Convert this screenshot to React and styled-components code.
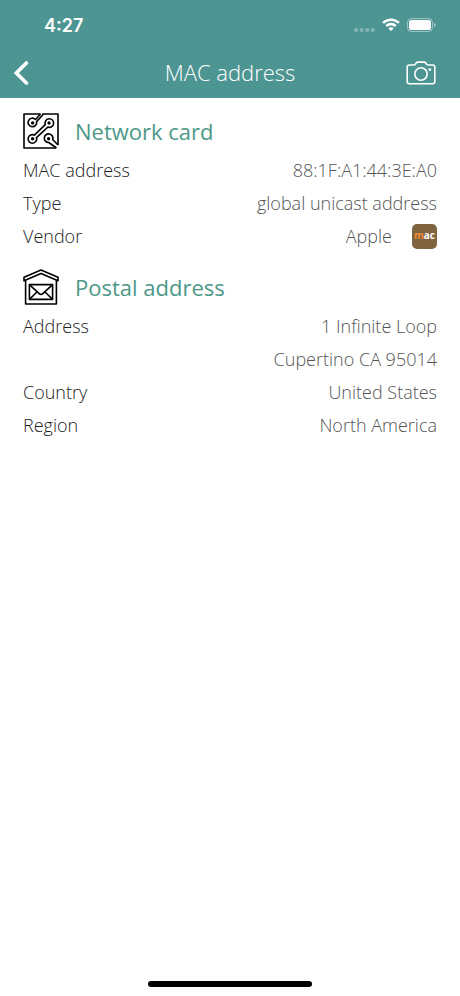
import React from 'react';
import styled, { createGlobalStyle } from 'styled-components';

const networkRows = [
  { label: 'MAC address', lines: ['88:1F:A1:44:3E:A0'] },
  { label: 'Type', lines: ['global unicast address'] },
  { label: 'Vendor', lines: ['Apple'], badge: true },
];

const postalRows = [
  { label: 'Address', lines: ['1 Infinite Loop', 'Cupertino CA 95014'] },
  { label: 'Country', lines: ['United States'] },
  { label: 'Region', lines: ['North America'] },
];

export default function App() {
  return (
    <Page>
      <GlobalStyle />
      <Header>
        <StatusBar />
        <NavBar>
          <NavButton type="button" aria-label="Back">
            <BackIcon />
          </NavButton>
          <NavTitle>MAC address</NavTitle>
          <NavButton type="button" aria-label="Take screenshot" $end>
            <CameraIcon />
          </NavButton>
        </NavBar>
      </Header>
      <Content>
        <Section icon={<CircuitIcon />} title="Network card" rows={networkRows} />
        <Section icon={<MailboxIcon />} title="Postal address" rows={postalRows} />
      </Content>
      <HomeIndicator />
    </Page>
  );
}

function StatusBar() {
  return (
    <StatusRow>
      <Clock>4:27</Clock>
      <StatusIcons>
        <svg width="21" height="4" viewBox="0 0 21 4" fill="#fff" opacity="0.28">
          <rect x="0" width="4" height="4" rx="1.4" />
          <rect x="5.6" width="4" height="4" rx="1.4" />
          <rect x="11.2" width="4" height="4" rx="1.4" />
          <rect x="16.8" width="4" height="4" rx="1.4" />
        </svg>
        <svg width="18" height="14" viewBox="0 0 18 14" fill="#fff">
          <path d="M9 .4C5.7.4 2.7 1.7.5 3.8c-.2.2-.2.5 0 .7l1.1 1.1c.2.2.5.2.7 0C4 4 6.4 3 9 3s5 1 6.700 2.600c.2.2.5.2.7 0l1.100-1.100c.2-.2.2-.5 0-.7C15.300 1.700 12.300.4 9 .4z" />
          <path d="M9 4.800c-2 0-3.900.8-5.300 2.100-.2.2-.2.5 0 .7l1.200 1.200c.2.2.5.2.7 0C6.500 8 7.700 7.400 9 7.400s2.500.6 3.400 1.400c.2.2.5.2.7 0l1.200-1.200c.2-.2.2-.5 0-.7C12.900 5.600 11 4.800 9 4.800z" />
          <path d="M9 9.200c-.9 0-1.700.3-2.300.8-.2.2-.2.5 0 .7l2 2c.2.2.4.2.6 0l2-2c.2-.2.2-.5 0-.7-.6-.5-1.400-.8-2.300-.8z" />
        </svg>
        <svg width="29" height="14" viewBox="0 0 29 14" fill="none">
          <rect x=".5" y=".5" width="25" height="13" rx="4" stroke="#fff" opacity="0.45" />
          <rect x="2" y="2" width="22" height="10" rx="2.500" fill="#fff" />
          <path d="M27 4.800v4.400c1-.3 1.500-1.200 1.500-2.200S28 5.100 27 4.800z" fill="#fff" opacity="0.5" />
        </svg>
      </StatusIcons>
    </StatusRow>
  );
}

function Section({ icon, title, rows = [] }) {
  return (
    <section>
      <SectionHead>
        {icon}
        <SectionTitle>{title}</SectionTitle>
      </SectionHead>
      <Rows>
        {rows.map(({ label, lines, badge }) => (
          <Row key={label}>
            <dt>{label}</dt>
            <dd>
              {lines.map((line) => (
                <Value key={line}>
                  {line}
                  {badge && (
                    <Badge>
                      <span>m</span>ac
                    </Badge>
                  )}
                </Value>
              ))}
            </dd>
          </Row>
        ))}
      </Rows>
    </section>
  );
}

function BackIcon() {
  return (
    <svg width="15" height="24" viewBox="0 0 15 24" fill="none" stroke="#fff" strokeWidth="3.6" strokeLinecap="round">
      <path d="M12.400 2L2.400 12l10 10" />
    </svg>
  );
}

function CameraIcon() {
  return (
    <svg width="30" height="24" viewBox="0 0 30 24" fill="none" stroke="#fff" strokeWidth="1.600" strokeLinejoin="round">
      <path d="M3.400 4h4.400c.8 0 1.300-.3 1.700-.9l.7-1.100c.4-.6.9-.9 1.600-.9h6.400c.7 0 1.200.3 1.600.9l.7 1.100c.4.6.9.9 1.700.9h4.400c1.300 0 2.200.9 2.200 2.200v14.400c0 1.300-.9 2.200-2.200 2.200H3.400c-1.300 0-2.200-.9-2.200-2.200V6.200C1.200 4.900 2.100 4 3.400 4z" />
      <circle cx="15" cy="13" r="6.200" />
      <circle cx="23.800" cy="8.600" r="1.400" fill="#fff" stroke="none" />
    </svg>
  );
}

function CircuitIcon() {
  return (
    <svg width="36" height="36" viewBox="0 0 36 36" fill="none" stroke="#000" strokeWidth="1.600" strokeLinejoin="round">
      <path d="M17.500 1H1v34h32" />
      <path d="M19.500 1H35v31" />
      <path d="M17.500 1l-5 5.500A4.300 4.300 0 1 0 13.600 8.600L20.500 1" />
      <path d="M13.500 24.600L24.800 14.100A4.300 4.300 0 1 0 22.300 11.600L11.400 22.100A4.300 4.300 0 1 0 13.500 24.600z" />
      <path d="M33.500 35l-7.800-5.500A4.300 4.300 0 1 1 29.700 26.500L35 32" />
      <g fill="#000" stroke="none">
        <circle cx="9.600" cy="10" r="1.700" />
        <circle cx="26" cy="10" r="1.700" />
        <circle cx="9.600" cy="25.800" r="1.700" />
        <circle cx="25.600" cy="25.800" r="1.700" />
      </g>
    </svg>
  );
}

function MailboxIcon() {
  return (
    <svg width="36" height="36" viewBox="0 0 36 36" fill="none" stroke="#000" strokeWidth="1.600" strokeLinejoin="round">
      <path d="M1 8.200L18 1l17 7.200v3.600L18 4.600 1 11.800z" />
      <path d="M2.600 11.400V35h30.800V11.400" />
      <rect x="6.400" y="15.600" width="23.200" height="14.800" />
      <path d="M6.400 15.600l9.800 9c1 1 2.600 1 3.600 0l9.800-9M6.400 30.400l7.800-7.600M29.600 30.400l-7.800-7.600" />
    </svg>
  );
}

const GlobalStyle = createGlobalStyle`
  * {
    box-sizing: border-box;
  }

  body {
    margin: 0;
    background: #fff;
    font-family: 'Open Sans', 'Noto Sans', sans-serif;
    font-weight: 300;
  }
`;

const Page = styled.div`
  display: flex;
  flex-direction: column;
  min-height: 100vh;
`;

const Header = styled.header`
  background: #4d9593;
  color: #fff;
`;

const StatusRow = styled.div`
  display: flex;
  justify-content: space-between;
  align-items: center;
  height: 50px;
  padding: 0 24px 0 44px;
`;

const Clock = styled.span`
  font-family: Inter, 'Liberation Sans', sans-serif;
  font-size: 18px;
  font-weight: 600;
`;

const StatusIcons = styled.div`
  display: flex;
  align-items: center;
  gap: 7px;

  svg:first-child {
    margin-top: 9px;
  }
`;

const NavBar = styled.div`
  display: grid;
  grid-template-columns: 60px 1fr 60px;
  align-items: center;
  height: 48px;
  padding: 0 14px 2px;
`;

const NavButton = styled.button`
  display: flex;
  justify-content: ${(props) => (props.$end ? 'flex-end' : 'flex-start')};
  align-items: center;
  height: 44px;
  padding: ${(props) => (props.$end ? '0 10px 0 0' : '0')};
  border: 0;
  background: none;
  cursor: pointer;
`;

const NavTitle = styled.h1`
  margin: 0;
  padding-bottom: 2px;
  font-size: 22px;
  font-weight: 300;
  line-height: 32px;
  text-align: center;
`;

const Content = styled.main`
  display: flex;
  flex: 1;
  flex-direction: column;
  gap: 11px;
  padding: 10px 23px;
`;

const SectionHead = styled.div`
  display: flex;
  align-items: center;
  gap: 16px;
  height: 46px;
`;

const SectionTitle = styled.h2`
  margin: 0;
  color: #4d9889;
  font-size: 22px;
  font-weight: 400;
  line-height: 32px;
`;

const Rows = styled.dl`
  margin: 0;
  color: #222;
  font-size: 18px;
  line-height: 33px;
`;

const Row = styled.div`
  display: flex;
  justify-content: space-between;

  dd {
    margin: 0;
    color: #555;
  }
`;

const Value = styled.div`
  display: flex;
  justify-content: flex-end;
  align-items: center;
  gap: 20px;
`;

const Badge = styled.span`
  width: 25px;
  height: 25px;
  border-radius: 5px;
  background: #80643f;
  color: #fff;
  font-size: 10px;
  font-weight: 700;
  line-height: 23px;
  text-align: center;

  span {
    color: #f08838;
  }
`;

const HomeIndicator = styled.div`
  width: 164px;
  height: 6px;
  margin: 0 auto 9px;
  border-radius: 3px;
  background: #000;
`;
